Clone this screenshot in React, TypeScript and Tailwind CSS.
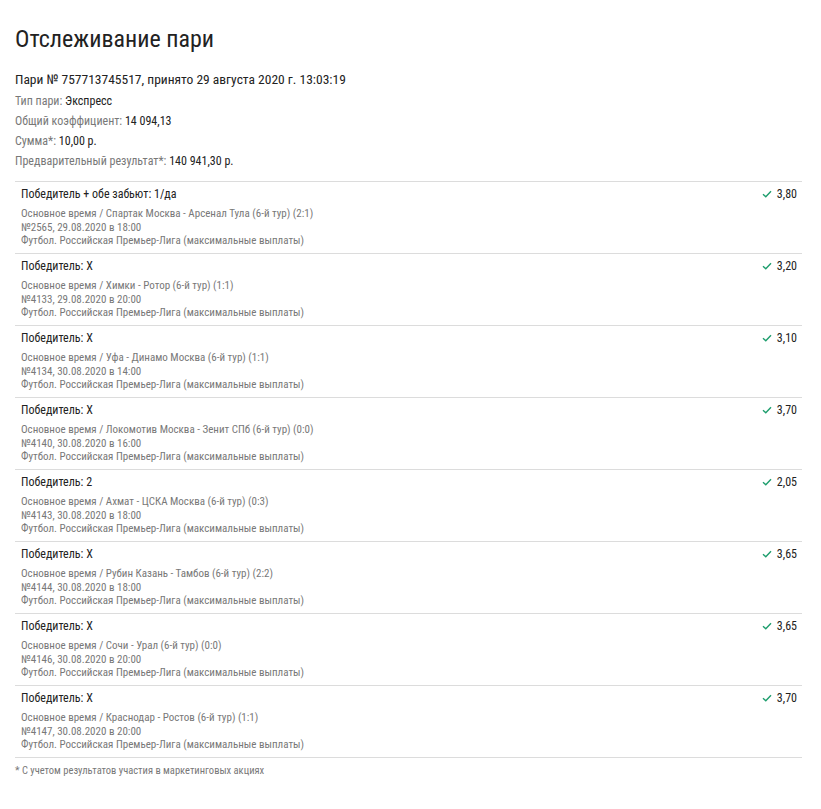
const bets = [
  { market: "Победитель + обе забьют: 1/да", event: "Спартак Москва - Арсенал Тула (6-й тур) (2:1)", num: "№2565, 29.08.2020 в 18:00", coef: "3,80" },
  { market: "Победитель: X", event: "Химки - Ротор (6-й тур) (1:1)", num: "№4133, 29.08.2020 в 20:00", coef: "3,20" },
  { market: "Победитель: X", event: "Уфа - Динамо Москва (6-й тур) (1:1)", num: "№4134, 30.08.2020 в 14:00", coef: "3,10" },
  { market: "Победитель: X", event: "Локомотив Москва - Зенит СПб (6-й тур) (0:0)", num: "№4140, 30.08.2020 в 16:00", coef: "3,70" },
  { market: "Победитель: 2", event: "Ахмат - ЦСКА Москва (6-й тур) (0:3)", num: "№4143, 30.08.2020 в 18:00", coef: "2,05" },
  { market: "Победитель: X", event: "Рубин Казань - Тамбов (6-й тур) (2:2)", num: "№4144, 30.08.2020 в 18:00", coef: "3,65" },
  { market: "Победитель: X", event: "Сочи - Урал (6-й тур) (0:0)", num: "№4146, 30.08.2020 в 20:00", coef: "3,65" },
  { market: "Победитель: X", event: "Краснодар - Ростов (6-й тур) (1:1)", num: "№4147, 30.08.2020 в 20:00", coef: "3,70" },
]

const info = [
  { label: "Тип пари:", value: "Экспресс" },
  { label: "Общий коэффициент:", value: "14 094,13" },
  { label: "Сумма*:", value: "10,00 р." },
  { label: "Предварительный результат*:", value: "140 941,30 р." },
]

function Check() {
  return (
    <svg width="10" height="8" viewBox="0 0 10 8" className="mr-[5px]">
      <path d="M1 4.2 L3.8 6.8 L9 1.2" fill="none" stroke="#1e9e6e" strokeWidth="1.4" />
    </svg>
  )
}

export default function App() {
  return (
    <div className="min-h-screen bg-white pl-[15px] pr-[19px] text-[#222] font-['Roboto_Condensed','Roboto',sans-serif]">
      <h1 className="pt-[25px] text-[24px] leading-[28px] font-normal text-[#222]">Отслеживание пари</h1>

      <div className="mt-[16px] text-[13.5px] leading-[20px]">Пари № 757713745517, принято 29 августа 2020 г. 13:03:19</div>
      <div className="mt-[2px] text-[12px] leading-[20px]">
        {info.map((row) => (
          <div key={row.label}>
            <span className="text-[#787878]">{row.label}</span> <span className="text-[#222]">{row.value}</span>
          </div>
        ))}
      </div>

      <div className="mt-[10px]">
        {bets.map((bet, i) => (
          <div key={i} className="border-t border-[#dcdcdc] h-[72px] pl-[6px] pr-[5px] pt-[4px] flex justify-between">
            <div>
              <div className="text-[12px] leading-[16px] text-[#222]">{bet.market}</div>
              <div className="mt-[5px] text-[11px] leading-[13.5px] text-[#787878]">
                <div>Основное время / {bet.event}</div>
                <div>{bet.num}</div>
                <div>Футбол. Российская Премьер-Лига (максимальные выплаты)</div>
              </div>
            </div>
            <div className="flex items-center h-[16px] text-[12px] text-[#222]">
              <Check />
              {bet.coef}
            </div>
          </div>
        ))}
        <div className="border-t border-[#dcdcdc] pt-[6px] text-[10.5px] leading-[13px] text-[#787878]">
          * С учетом результатов участия в маркетинговых акциях
        </div>
      </div>
    </div>
  )
}
